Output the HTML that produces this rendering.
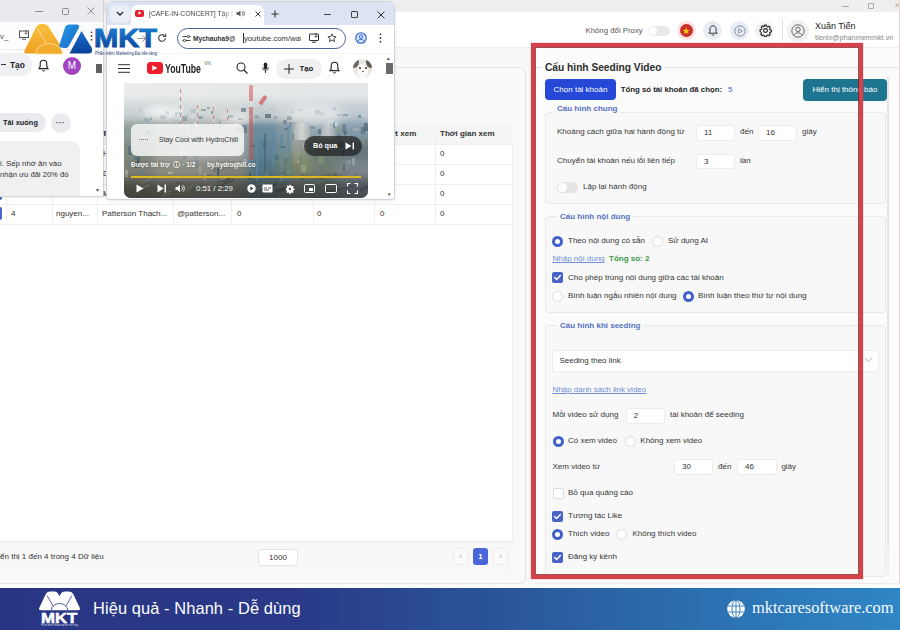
<!DOCTYPE html>
<html><head><meta charset="utf-8">
<style>
*{box-sizing:border-box;margin:0;padding:0}
html,body{width:900px;height:630px;overflow:hidden;background:#f8f8f8;font-family:"Liberation Sans",sans-serif;color:#333}
.a{position:absolute}
.t{position:absolute;white-space:nowrap;line-height:12px}
.box{position:absolute;border:1px solid #e8e8e8;border-radius:4px;background:#f8f8f8}
.inp{position:absolute;background:#fff;border:1px solid #ececec;border-radius:3px;font-size:8px;line-height:14px;padding-left:7px;color:#333}
.rad{position:absolute;width:11px;height:11px;border-radius:50%;background:#fff;border:1px solid #dcdcdc}
.rad.on{background:#fff;border:3px solid #4160c9}
.chk{position:absolute;width:11px;height:11px;border-radius:2px;background:#fff;border:1px solid #dcdcdc}
.chk.on{background:#4a63c8;border:none}
.lg{position:absolute;white-space:nowrap;line-height:12px;font-size:8px;font-weight:bold;color:#5570c2;background:linear-gradient(180deg,#fbfbfb 50%,#f8f8f8 50%);padding:0 3px}
.p8{font-size:8px;color:#3a3a3a}
</style></head><body>

<!-- app title bar -->
<div class="a" style="left:0;top:0;width:900px;height:12px;background:#efefef"></div>
<div class="a" style="left:842px;top:6px;width:7px;height:1px;background:#aaa"></div>
<div class="a" style="left:868px;top:3px;width:6px;height:6px;border:1px solid #aaa;border-radius:1px"></div>
<div class="t" style="left:894px;top:0;font-size:8px;color:#d0b0b0">✕</div>
<div class="a" style="left:899px;top:0;width:1px;height:630px;background:#f3d6d6"></div>

<!-- app header -->
<div class="a" style="left:0;top:12px;width:899px;height:36px;background:#fff;border-bottom:1px solid #eee"></div>
<div class="t p8" style="left:585.5px;top:25px;font-size:7.8px;color:#555">Không đổi Proxy</div>
<div class="a" style="left:648px;top:26px;width:22px;height:10px;border-radius:5px;background:#e9e9e9"></div>
<div class="a" style="left:649px;top:27px;width:8px;height:8px;border-radius:50%;background:#fff"></div>
<div class="a" style="left:677px;top:21px;width:19px;height:19px;border-radius:50%;background:#fbe3e3"></div>
<div class="a" style="left:680px;top:24px;width:13px;height:13px;border-radius:50%;background:#c9302a"></div>
<div class="t" style="left:682px;top:24.5px;font-size:9px;color:#f5d000;line-height:12px">★</div>
<div class="a" style="left:703px;top:21px;width:19px;height:19px;border-radius:50%;background:#e8ecf3"></div>
<div class="a" style="left:730px;top:21px;width:19px;height:19px;border-radius:50%;background:#e8ecf3"></div>
<div class="a" style="left:755px;top:21px;width:19px;height:19px;border-radius:50%;background:#f2f2f2"></div>
<div class="a" style="left:782px;top:19px;width:1px;height:22px;background:#e3e3e3"></div>
<div class="a" style="left:787px;top:20px;width:22px;height:22px;border-radius:50%;background:#f1f1f1"></div>
<svg class="a" style="left:708px;top:25px" width="10" height="11" viewBox="0 0 10 11"><path d="M5 0.8c-1.8 0-3 1.3-3 3.1v2.5L0.9 8.2h8.2L8 6.4V3.9C8 2.1 6.8.8 5 .8z" fill="none" stroke="#333" stroke-width="1"/><path d="M3.8 9.5a1.3 1.3 0 0 0 2.4 0" fill="none" stroke="#333" stroke-width="0.9"/></svg>
<svg class="a" style="left:733.5px;top:24.5px" width="12" height="12" viewBox="0 0 12 12"><circle cx="6" cy="6" r="5.2" fill="none" stroke="#8a93a8" stroke-width="1"/><path d="M4.6 3.6L8.3 6 4.6 8.4z" fill="none" stroke="#8a93a8" stroke-width="0.9" stroke-linejoin="round"/></svg>
<svg class="a" style="left:758.5px;top:24px" width="13" height="13" viewBox="0 0 24 24"><path d="M12 8.5a3.5 3.5 0 1 0 0 7 3.5 3.5 0 0 0 0-7z" fill="none" stroke="#222" stroke-width="2"/><path d="M10.3 2h3.4l.6 2.6 1.8.8 2.3-1.4 2.4 2.4-1.4 2.3.8 1.8 2.6.6v3.4l-2.6.6-.8 1.8 1.4 2.3-2.4 2.4-2.3-1.4-1.8.8-.6 2.6h-3.4l-.6-2.6-1.8-.8-2.3 1.4-2.4-2.4 1.4-2.3-.8-1.8L2 13.7v-3.4l2.6-.6.8-1.8L4 5.6 6.4 3.2l2.3 1.4 1.8-.8z" fill="none" stroke="#222" stroke-width="2" stroke-linejoin="round"/></svg>
<svg class="a" style="left:791px;top:24px" width="14" height="14" viewBox="0 0 14 14"><circle cx="7" cy="7" r="6.2" fill="none" stroke="#666" stroke-width="1"/><circle cx="7" cy="5.4" r="2.2" fill="none" stroke="#666" stroke-width="1"/><path d="M3 11.2c.9-1.6 2.3-2.4 4-2.4s3.1.8 4 2.4" fill="none" stroke="#666" stroke-width="1"/></svg>
<div class="t" style="left:815px;top:19.5px;font-size:9px;color:#222">Xuân Tiến</div>
<div class="t" style="left:815px;top:32px;font-size:7.3px;color:#888">tienlx@phanmemmkt.vn</div>

<!-- left panel -->
<div class="a" style="left:-10px;top:67px;width:536px;height:517px;border:1px solid #e6e6e6;border-radius:6px;background:#f9f9f9"></div>
<div id="table" class="a" style="left:-10px;top:124px;width:523px;height:449px;background:#fff;border:1px solid #eee;border-radius:4px"></div>
<div class="a" style="left:-10px;top:124px;width:523px;height:20px;background:#f5f5f5"></div>

<div class="a" style="left:6px;top:124px;width:1px;height:100px;background:#efefef"></div>
<div class="a" style="left:52px;top:124px;width:1px;height:100px;background:#efefef"></div>
<div class="a" style="left:97px;top:124px;width:1px;height:100px;background:#efefef"></div>
<div class="a" style="left:173px;top:124px;width:1px;height:100px;background:#efefef"></div>
<div class="a" style="left:231px;top:124px;width:1px;height:100px;background:#efefef"></div>
<div class="a" style="left:313px;top:124px;width:1px;height:100px;background:#efefef"></div>
<div class="a" style="left:374px;top:124px;width:1px;height:100px;background:#efefef"></div>
<div class="a" style="left:435px;top:124px;width:1px;height:100px;background:#efefef"></div>
<div class="a" style="left:-10px;top:144px;width:523px;height:1px;background:#efefef"></div>
<div class="a" style="left:-10px;top:164px;width:523px;height:1px;background:#efefef"></div>
<div class="a" style="left:-10px;top:184px;width:523px;height:1px;background:#efefef"></div>
<div class="a" style="left:-10px;top:204px;width:523px;height:1px;background:#efefef"></div>
<div class="a" style="left:-10px;top:224px;width:523px;height:1px;background:#efefef"></div>
<div class="t" style="left:102px;top:128px;font-size:8px;font-weight:bold;color:#333">Tên</div>
<div class="t" style="left:178px;top:128px;font-size:8px;font-weight:bold;color:#333">Handle</div>
<div class="t" style="left:236px;top:128px;font-size:8px;font-weight:bold;color:#333">Lượt thích</div>
<div class="t" style="left:318px;top:128px;font-size:8px;font-weight:bold;color:#333">Bình luận</div>
<div class="t" style="left:379px;top:128px;font-size:8px;font-weight:bold;color:#333">Lượt xem</div>
<div class="t" style="left:440px;top:128px;font-size:8px;font-weight:bold;color:#333">Thời gian xem</div>
<div class="a" style="left:-4px;top:147px;width:6px;height:13px;border-radius:2px;background:#4a63c8"></div>
<div class="t" style="left:11px;top:148px;font-size:8px;color:#333">1</div>
<div class="t" style="left:56px;top:148px;font-size:8px;color:#333">nguyen...</div>
<div class="t" style="left:102px;top:148px;font-size:8px;color:#333">Handle H...</div>
<div class="t" style="left:177px;top:148px;font-size:8px;color:#333">@handle...</div>
<div class="t" style="left:237px;top:148px;font-size:8px;color:#333">0</div>
<div class="t" style="left:317px;top:148px;font-size:8px;color:#333">0</div>
<div class="t" style="left:380px;top:148px;font-size:8px;color:#333">0</div>
<div class="t" style="left:440px;top:148px;font-size:8px;color:#333">0</div>
<div class="a" style="left:-4px;top:167px;width:6px;height:13px;border-radius:2px;background:#4a63c8"></div>
<div class="t" style="left:11px;top:168px;font-size:8px;color:#333">2</div>
<div class="t" style="left:56px;top:168px;font-size:8px;color:#333">dinh...</div>
<div class="t" style="left:102px;top:168px;font-size:8px;color:#333">Dương M...</div>
<div class="t" style="left:177px;top:168px;font-size:8px;color:#333">@duong...</div>
<div class="t" style="left:237px;top:168px;font-size:8px;color:#333">0</div>
<div class="t" style="left:317px;top:168px;font-size:8px;color:#333">0</div>
<div class="t" style="left:380px;top:168px;font-size:8px;color:#333">0</div>
<div class="t" style="left:440px;top:168px;font-size:8px;color:#333">0</div>
<div class="a" style="left:-4px;top:187px;width:6px;height:13px;border-radius:2px;background:#4a63c8"></div>
<div class="t" style="left:11px;top:188px;font-size:8px;color:#333">3</div>
<div class="t" style="left:56px;top:188px;font-size:8px;color:#333">tran...</div>
<div class="t" style="left:102px;top:188px;font-size:8px;color:#333">Mai Anh...</div>
<div class="t" style="left:177px;top:188px;font-size:8px;color:#333">@maianh...</div>
<div class="t" style="left:237px;top:188px;font-size:8px;color:#333">0</div>
<div class="t" style="left:317px;top:188px;font-size:8px;color:#333">0</div>
<div class="t" style="left:380px;top:188px;font-size:8px;color:#333">0</div>
<div class="t" style="left:440px;top:188px;font-size:8px;color:#333">0</div>
<div class="a" style="left:-4px;top:207px;width:6px;height:13px;border-radius:2px;background:#4a63c8"></div>
<div class="t" style="left:11px;top:208px;font-size:8px;color:#333">4</div>
<div class="t" style="left:56px;top:208px;font-size:8px;color:#333">nguyen...</div>
<div class="t" style="left:102px;top:208px;font-size:8px;color:#333">Patterson Thạch...</div>
<div class="t" style="left:177px;top:208px;font-size:8px;color:#333">@patterson...</div>
<div class="t" style="left:237px;top:208px;font-size:8px;color:#333">0</div>
<div class="t" style="left:317px;top:208px;font-size:8px;color:#333">0</div>
<div class="t" style="left:380px;top:208px;font-size:8px;color:#333">0</div>
<div class="t" style="left:440px;top:208px;font-size:8px;color:#333">0</div>
<div class="a" style="left:-10px;top:541px;width:523px;height:32px;background:#f8f8f8;border-top:1px solid #ececec;border-radius:0 0 4px 4px"></div>
<div class="t" style="left:-7.5px;top:551px;font-size:8px;color:#333">Hiển thị 1 đến 4 trong 4 Dữ liệu</div>
<div class="a" style="left:258px;top:548.5px;width:40px;height:17px;background:#fff;border:1px solid #e2e2e2;border-radius:3px;font-size:8px;line-height:15px;text-align:center;color:#333">1000</div>
<div class="a" style="left:453px;top:548px;width:15px;height:17px;background:#fafafa;border:1px solid #ececec;border-radius:3px;font-size:8px;line-height:15px;text-align:center;color:#aaa">‹</div>
<div class="a" style="left:473px;top:548px;width:15px;height:17px;background:#4866d8;border-radius:3px;font-size:8px;font-weight:bold;line-height:17px;text-align:center;color:#fff">1</div>
<div class="a" style="left:493px;top:548px;width:15px;height:17px;background:#fafafa;border:1px solid #ececec;border-radius:3px;font-size:8px;line-height:15px;text-align:center;color:#aaa">›</div>

<!-- right panel -->
<div class="a" style="left:535px;top:48px;width:364px;height:536px;background:#fbfbfb;border-bottom:1px solid #ececec"></div>

<!-- rp content -->
<div class="a" style="left:535px;top:66.5px;width:364px;height:1px;background:#e2e2e2"></div>
<div class="t" style="left:542px;top:60.5px;font-size:10.2px;font-weight:bold;color:#2d2d2d;background:#fbfbfb;padding:0 3px;line-height:13px">Cấu hình Seeding Video</div>
<div class="a" style="left:886.5px;top:77px;width:2.5px;height:470px;background:#e6e6e6"></div><div class="a" style="left:886.5px;top:547px;width:2px;height:28px;background:#f0f0f0"></div>
<div class="a" style="left:545px;top:79px;width:71px;height:21px;background:#2549d6;border-radius:4px;color:#fff;font-size:8px;line-height:22px;text-align:center">Chọn tài khoản</div>
<div class="t" style="left:620.7px;top:84.0px;font-size:7.8px;color:#222;font-weight:bold;">Tổng số tài khoản đã chọn:</div>
<div class="t" style="left:728px;top:84.0px;font-size:8px;color:#3a5fd0;">5</div>
<div class="a" style="left:803px;top:79px;width:84px;height:22px;background:#1e7590;border-radius:4px;color:#fff;font-size:8px;line-height:22px;text-align:center">Hiển thị thông báo</div>
<div class="box" style="left:545px;top:112px;width:341px;height:92px"></div>
<div class="lg" style="left:554px;top:103.0px">Cấu hình chung</div>
<div class="t" style="left:557px;top:126.0px;font-size:8px;color:#363636;">Khoảng cách giữa hai hành động từ</div>
<div class="inp" style="left:696px;top:124.5px;width:39px;height:16.0px;line-height:14.0px">11</div>
<div class="t" style="left:740px;top:126.0px;font-size:8px;color:#363636;">đến</div>
<div class="inp" style="left:758px;top:124.5px;width:39px;height:16.0px;line-height:14.0px">16</div>
<div class="t" style="left:802px;top:126.0px;font-size:8px;color:#363636;">giây</div>
<div class="t" style="left:557px;top:155.0px;font-size:8px;color:#363636;">Chuyển tài khoản nếu lỗi liên tiếp</div>
<div class="inp" style="left:696px;top:153.5px;width:39px;height:15.5px;line-height:13.5px">3</div>
<div class="t" style="left:740px;top:155.0px;font-size:8px;color:#363636;">lần</div>
<div class="a" style="left:557px;top:182px;width:21px;height:11px;border-radius:6px;background:#e4e4e4"></div>
<div class="a" style="left:558px;top:183px;width:9px;height:9px;border-radius:50%;background:#fff"></div>
<div class="t" style="left:583px;top:181.0px;font-size:8px;color:#363636;">Lặp lại hành động</div>
<div class="box" style="left:545px;top:216px;width:341px;height:97px"></div>
<div class="lg" style="left:557px;top:211.0px">Cấu hình nội dung</div>
<div class="rad on" style="left:552.1px;top:235.5px"></div>
<div class="t" style="left:568px;top:235.0px;font-size:8px;color:#363636;">Theo nội dung có sẵn</div>
<div class="rad" style="left:652.1px;top:235.5px"></div>
<div class="t" style="left:668px;top:235.0px;font-size:8px;color:#363636;">Sử dụng AI</div>
<div class="t" style="left:552.5px;top:253.4px;font-size:8px;color:#6e8fd8;text-decoration:underline">Nhập nội dung</div>
<div class="t" style="left:609px;top:253.4px;font-size:8px;color:#3c9a4c;font-weight:bold;">Tổng số: 2</div>
<div class="chk on" style="left:552.4px;top:272.2px"></div><svg class="a" style="left:552.4px;top:272.2px" width="11" height="11" viewBox="0 0 11 11"><path d="M2.6 5.6 L4.6 7.5 L8.4 3.4" stroke="#fff" stroke-width="1.4" fill="none" stroke-linecap="round" stroke-linejoin="round"/></svg>
<div class="t" style="left:568px;top:271.5px;font-size:8px;color:#363636;">Cho phép trùng nội dung giữa các tài khoản</div>
<div class="rad" style="left:552.1px;top:290.5px"></div>
<div class="t" style="left:568px;top:290.0px;font-size:8px;color:#363636;">Bình luận ngẫu nhiên nội dung</div>
<div class="rad on" style="left:682.5px;top:290.5px"></div>
<div class="t" style="left:698px;top:290.0px;font-size:8px;color:#363636;">Bình luận theo thứ tự nội dung</div>
<div class="box" style="left:545px;top:325px;width:341px;height:252px"></div>
<div class="lg" style="left:557px;top:319.6px">Cấu hình khi seeding</div>
<div class="inp" style="left:552.4px;top:350px;width:327px;height:22px;line-height:20px;padding-left:6px">Seeding theo link</div>
<svg class="a" style="left:864px;top:357px" width="9" height="6" viewBox="0 0 9 6"><path d="M1 1 L4.5 4.5 L8 1" stroke="#bbb" stroke-width="1" fill="none"/></svg>
<div class="t" style="left:552.4px;top:384.0px;font-size:8px;color:#6e8fd8;text-decoration:underline">Nhập danh sách link video</div>
<div class="t" style="left:552.5px;top:409.0px;font-size:8px;color:#363636;">Mỗi video sử dụng</div>
<div class="inp" style="left:625.7px;top:407.8px;width:38.89999999999998px;height:16.5px;line-height:14.5px">2</div>
<div class="t" style="left:670px;top:409.0px;font-size:8px;color:#363636;">tài khoản để seeding</div>
<div class="rad on" style="left:552.5px;top:435.9px"></div>
<div class="t" style="left:568px;top:435.4px;font-size:8px;color:#363636;">Có xem video</div>
<div class="rad" style="left:624.8px;top:435.9px"></div>
<div class="t" style="left:640.3px;top:435.4px;font-size:8px;color:#363636;">Không xem video</div>
<div class="t" style="left:552.5px;top:461.0px;font-size:8px;color:#363636;">Xem video từ</div>
<div class="inp" style="left:674px;top:459px;width:39px;height:16.399999999999977px;line-height:14.399999999999977px">30</div>
<div class="t" style="left:718px;top:461.0px;font-size:8px;color:#363636;">đến</div>
<div class="inp" style="left:737px;top:459px;width:40px;height:16.399999999999977px;line-height:14.399999999999977px">46</div>
<div class="t" style="left:781.4px;top:461.0px;font-size:8px;color:#363636;">giây</div>
<div class="chk" style="left:552.5px;top:487.5px"></div>
<div class="t" style="left:568px;top:487.0px;font-size:8px;color:#363636;">Bỏ qua quảng cáo</div>
<div class="chk on" style="left:552.4px;top:511px"></div><svg class="a" style="left:552.4px;top:511px" width="11" height="11" viewBox="0 0 11 11"><path d="M2.6 5.6 L4.6 7.5 L8.4 3.4" stroke="#fff" stroke-width="1.4" fill="none" stroke-linecap="round" stroke-linejoin="round"/></svg>
<div class="t" style="left:568px;top:510.0px;font-size:8px;color:#363636;">Tương tác Like</div>
<div class="rad on" style="left:552.1px;top:528.5px"></div>
<div class="t" style="left:568px;top:528.0px;font-size:8px;color:#363636;">Thích video</div>
<div class="rad" style="left:616.1px;top:528.5px"></div>
<div class="t" style="left:632.4px;top:528.0px;font-size:8px;color:#363636;">Không thích video</div>
<div class="chk on" style="left:552.4px;top:552px"></div><svg class="a" style="left:552.4px;top:552px" width="11" height="11" viewBox="0 0 11 11"><path d="M2.6 5.6 L4.6 7.5 L8.4 3.4" stroke="#fff" stroke-width="1.4" fill="none" stroke-linecap="round" stroke-linejoin="round"/></svg>
<div class="t" style="left:568px;top:551.0px;font-size:8px;color:#363636;">Đăng ký kênh</div>
<!-- /rp content -->
<div class="a" style="left:0;top:584.5px;width:900px;height:4px;background:#fdfdfd"></div>
<!-- banner -->
<div class="a" style="left:0;top:588px;width:900px;height:42px;background:linear-gradient(90deg,#283583 0%,#2a3a88 33%,#2a5598 55%,#2c70b0 78%,#2f86c6 100%)"></div>

<!-- red border -->
<div class="a" style="left:531px;top:43px;width:332px;height:536px;border:4px solid #d6424a;box-shadow:inset 0 0 0 1px rgba(120,25,30,.75),0 0 1.5px rgba(230,80,90,.5)"></div>

<!-- fb window -->
<div class="a" style="left:0;top:0;width:103px;height:196px;background:#fff;overflow:hidden;box-shadow:0 0 0 1px #d6d6d6,1px 1px 3px rgba(0,0,0,.12)">
<div class="a" style="left:0;top:0;width:105px;height:22px;background:#e9ebef"></div>
<div class="a" style="left:35px;top:11px;width:8px;height:1px;background:#888"></div>
<div class="a" style="left:61.5px;top:7.5px;width:7px;height:7px;border:1px solid #888;border-radius:1.5px"></div>
<svg class="a" style="left:87px;top:7px" width="8" height="8" viewBox="0 0 8 8"><path d="M0.5 0.5L7.5 7.5M7.5 0.5L0.5 7.5" stroke="#888" stroke-width="0.9"/></svg>
<div class="a" style="left:0;top:22px;width:105px;height:28px;background:#fdfdfd;border-bottom:1px solid #ededed"></div>
<div class="t" style="left:0;top:31px;font-size:8px;color:#555">v_</div>
<svg class="a" style="left:19px;top:30px" width="11" height="10" viewBox="0 0 11 10"><rect x="0.5" y="1" width="9" height="6.5" fill="none" stroke="#555" stroke-width="1"/><path d="M3 9.2h4" stroke="#555"/><path d="M7 0v4M5.6 2.8L7 4.3 8.4 2.8" stroke="#555" fill="none" stroke-width="0.9"/></svg>
<svg class="a" style="left:89.5px;top:31px" width="3" height="10" viewBox="0 0 3 10"><circle cx="1.5" cy="1.3" r="0.9" fill="#444"/><circle cx="1.5" cy="5" r="0.9" fill="#444"/><circle cx="1.5" cy="8.7" r="0.9" fill="#444"/></svg>
<div class="a" style="left:-6px;top:53px;width:38px;height:23px;border-radius:12px;background:#eef0f3"></div>
<div class="a" style="left:1px;top:64px;width:5px;height:1px;background:#333"></div>
<div class="t" style="left:10px;top:59px;font-size:8.4px;color:#222;font-weight:bold">Tạo</div>
<svg class="a" style="left:38px;top:59px" width="11" height="13" viewBox="0 0 11 13"><path d="M5.5 1.2c-2 0-3.3 1.5-3.3 3.5v2.8L1 9.6h9L8.8 7.5V4.7c0-2-1.3-3.5-3.3-3.5z" fill="none" stroke="#222" stroke-width="1.1"/><path d="M4.2 11.2a1.4 1.4 0 0 0 2.6 0" fill="none" stroke="#222" stroke-width="1"/></svg>
<div class="a" style="left:63px;top:57px;width:18px;height:18px;border-radius:50%;background:#a044bf;color:#fff;font-size:10px;line-height:18px;text-align:center">M</div>
<div class="a" style="left:96px;top:64px;width:6px;height:9px;background:#5f5f5f"></div>
<div class="a" style="left:-10px;top:113px;width:56px;height:19px;border-radius:10px;background:#e9ebee"></div>
<div class="t" style="left:3px;top:117px;font-size:7.4px;color:#222;font-weight:bold">Tải xuống</div>
<div class="a" style="left:51px;top:113px;width:20px;height:20px;border-radius:50%;background:#e9ebee"></div>
<div class="t" style="left:55.5px;top:117px;font-size:8px;color:#333;font-weight:bold;letter-spacing:0.5px">···</div>
<div class="a" style="left:-20px;top:141px;width:100px;height:70px;border-radius:9px;background:#f0f0f0"></div>
<div class="t" style="left:0;top:158px;font-size:7.8px;color:#333">i. Sếp nhớ ăn vào</div>
<div class="t" style="left:0;top:169px;font-size:7.6px;color:#333">nhận ưu đãi 20% đó</div>
<div class="t" style="left:96px;top:184px;font-size:6px;color:#555">▾</div>
</div>
<div class="t" style="left:103px;top:128px;font-size:8px;color:#555">T</div>
<div class="t" style="left:103px;top:148px;font-size:8px;color:#555">H</div>
<div class="t" style="left:103px;top:168px;font-size:8px;color:#555">D</div>
<div class="t" style="left:103px;top:188px;font-size:8px;color:#555">M</div>
<!-- /fb window -->
<!-- chrome -->
<div class="a" style="left:107px;top:2px;width:287px;height:197px;background:#fff;border-radius:6px 6px 2px 2px;overflow:hidden;box-shadow:0 0 0 1px #cfd4dc,0 1px 4px rgba(0,0,0,.15)">
<div class="a" style="left:0;top:0;width:288px;height:23px;background:#dce4f3"></div>
<div class="a" style="left:3px;top:3px;width:20px;height:18px;border-radius:6px;background:#eaeef7"></div>
<svg class="a" style="left:9px;top:9px" width="8" height="5" viewBox="0 0 8 5"><path d="M1 1L4 4L7 1" stroke="#222" stroke-width="1.3" fill="none"/></svg>
<div class="a" style="left:24px;top:3px;width:133px;height:21px;background:#fff;border-radius:7px 7px 0 0"></div>
<div class="a" style="left:27.5px;top:7.5px;width:9.5px;height:7px;background:#e0202a;border-radius:2px"></div>
<svg class="a" style="left:30.5px;top:9px" width="4" height="4" viewBox="0 0 4 4"><path d="M0.5 0.3L3.5 2L0.5 3.7z" fill="#fff"/></svg>
<div class="t" style="left:42px;top:5.5px;font-size:6.8px;color:#444;width:84px;overflow:hidden;-webkit-mask-image:linear-gradient(90deg,#000 86%,rgba(0,0,0,.2))">[CAFE-IN-CONCERT] Tập 5: Hà</div>
<svg class="a" style="left:129px;top:8px" width="9" height="7" viewBox="0 0 9 7"><path d="M0.5 2.3h1.8L4.5 0.5v6L2.3 4.7H0.5z" fill="#555"/><path d="M6 1.8a2.3 2.3 0 0 1 0 3.4M7.3 0.8a3.8 3.8 0 0 1 0 5.4" stroke="#555" stroke-width="0.8" fill="none"/></svg>
<svg class="a" style="left:148px;top:9px" width="6" height="6" viewBox="0 0 6 6"><path d="M0.5 0.5L5.5 5.5M5.5 0.5L0.5 5.5" stroke="#333" stroke-width="0.9"/></svg>
<svg class="a" style="left:164px;top:8px" width="8" height="8" viewBox="0 0 8 8"><path d="M4 0.5v7M0.5 4h7" stroke="#333" stroke-width="1.1"/></svg>
<div class="a" style="left:217px;top:11.5px;width:7px;height:1px;background:#444"></div>
<div class="a" style="left:244px;top:8.5px;width:7px;height:7px;border:1px solid #444;border-radius:1px"></div>
<svg class="a" style="left:270px;top:8.5px" width="8" height="8" viewBox="0 0 8 8"><path d="M0.5 0.5L7.5 7.5M7.5 0.5L0.5 7.5" stroke="#333" stroke-width="1"/></svg>
<div class="a" style="left:0;top:23px;width:288px;height:29px;background:#fff;border-bottom:1px solid #f6f6f6"></div>
<svg class="a" style="left:30px;top:32px" width="10" height="9" viewBox="0 0 10 9"><path d="M0.5 4.5h8M5.5 1.5l3 3-3 3" stroke="#999" stroke-width="1" fill="none"/></svg>
<svg class="a" style="left:50px;top:31px" width="10" height="10" viewBox="0 0 10 10"><path d="M8.3 5a3.3 3.3 0 1 1-1-2.4" stroke="#444" stroke-width="1.1" fill="none"/><path d="M8.6 0.8v2.6H6" stroke="#444" stroke-width="1.1" fill="none"/></svg>
<div class="a" style="left:70px;top:26px;width:169px;height:21px;border:1.6px solid #4d6497;border-radius:11px;background:#fff"></div>
<svg class="a" style="left:75px;top:32px" width="9" height="9" viewBox="0 0 9 9"><path d="M0.5 2.5h5M7.5 2.5h1M0.5 6.5h1M3.5 6.5h5" stroke="#444" stroke-width="1"/><circle cx="6.5" cy="2.5" r="1.2" fill="none" stroke="#444" stroke-width="0.9"/><circle cx="2.5" cy="6.5" r="1.2" fill="none" stroke="#444" stroke-width="0.9"/></svg>
<div class="t" style="left:86px;top:30.5px;font-size:6.6px;font-weight:bold;color:#333">Mychauha9@</div>
<div class="a" style="left:136px;top:31px;width:1px;height:10px;background:#333"></div>
<div class="t" style="left:137px;top:30.5px;font-size:7.7px;color:#333;width:57px;overflow:hidden">youtube.com/watch</div>
<svg class="a" style="left:202px;top:31px" width="11" height="10" viewBox="0 0 11 10"><rect x="0.5" y="1" width="9" height="6.5" rx="0.5" fill="none" stroke="#333" stroke-width="1"/><path d="M3 9.2h4" stroke="#333"/><path d="M7 0v4M5.6 2.8L7 4.3 8.4 2.8" stroke="#333" fill="none" stroke-width="0.9"/></svg>
<svg class="a" style="left:220px;top:31px" width="10" height="10" viewBox="0 0 10 10"><path d="M5 0.8l1.2 2.7 2.9.3-2.2 1.9.7 2.9L5 7.1 2.4 8.6l.7-2.9L.9 3.8l2.9-.3z" fill="none" stroke="#333" stroke-width="0.9" stroke-linejoin="round"/></svg>
<svg class="a" style="left:248px;top:30px" width="12" height="12" viewBox="0 0 12 12"><circle cx="6" cy="6" r="5.3" fill="#d3e3fd" stroke="#2f63c7" stroke-width="1.1"/><circle cx="6" cy="4.6" r="1.7" fill="none" stroke="#2f63c7" stroke-width="1"/><path d="M2.8 9.3c.8-1.4 1.9-2 3.2-2s2.4.6 3.2 2" fill="none" stroke="#2f63c7" stroke-width="1"/></svg>
<svg class="a" style="left:272px;top:31px" width="3" height="10" viewBox="0 0 3 10"><circle cx="1.5" cy="1.3" r="0.9" fill="#333"/><circle cx="1.5" cy="5" r="0.9" fill="#333"/><circle cx="1.5" cy="8.7" r="0.9" fill="#333"/></svg>
<svg class="a" style="left:11px;top:62px" width="12" height="9" viewBox="0 0 12 9"><path d="M0 0.7h12M0 4.5h12M0 8.3h12" stroke="#333" stroke-width="1"/></svg>
<div class="a" style="left:39.5px;top:60px;width:16px;height:12px;background:#ec1c2c;border-radius:3.5px"></div>
<svg class="a" style="left:45px;top:63px" width="6" height="6" viewBox="0 0 6 6"><path d="M0.3 0.2L5.5 3L0.3 5.8z" fill="#fff"/></svg>
<div class="t" style="left:57.5px;top:59px;font-size:13.5px;font-weight:bold;color:#222;letter-spacing:0;transform:scaleX(0.645);transform-origin:0 0;line-height:15px">YouTube</div>
<div class="t" style="left:97px;top:55px;font-size:5px;color:#666">VN</div>
<svg class="a" style="left:129px;top:60px" width="12" height="12" viewBox="0 0 12 12"><circle cx="5" cy="5" r="4" fill="none" stroke="#222" stroke-width="1.1"/><path d="M8 8l3.5 3.5" stroke="#222" stroke-width="1.2"/></svg>
<svg class="a" style="left:155px;top:60px" width="7" height="12" viewBox="0 0 7 12"><rect x="1.8" y="0.5" width="3.4" height="7" rx="1.7" fill="#222"/><path d="M0.6 5.5a2.9 2.9 0 0 0 5.8 0M3.5 8.6V11" stroke="#222" stroke-width="0.9" fill="none"/></svg>
<div class="a" style="left:169px;top:57px;width:46px;height:20px;border-radius:10px;background:#f0f0f0"></div>
<svg class="a" style="left:177px;top:62px" width="10" height="10" viewBox="0 0 10 10"><path d="M5 0v10M0 5h10" stroke="#222" stroke-width="1"/></svg>
<div class="t" style="left:192.5px;top:61px;font-size:7.8px;font-weight:bold;color:#222">Tạo</div>
<svg class="a" style="left:222px;top:59px" width="11" height="13" viewBox="0 0 11 13"><path d="M5.5 1.2c-2 0-3.3 1.5-3.3 3.5v2.8L1 9.6h9L8.8 7.5V4.7c0-2-1.3-3.5-3.3-3.5z" fill="none" stroke="#222" stroke-width="1.1"/><path d="M4.2 11.2a1.4 1.4 0 0 0 2.6 0" fill="none" stroke="#222" stroke-width="1"/></svg>
<div class="a" style="left:246px;top:57px;width:19px;height:19px;border-radius:50%;overflow:hidden;background:#e9e6e0">
<div class="a" style="left:-4px;top:-3px;width:10px;height:12px;border-radius:50%;background:#6d6760"></div>
<div class="a" style="left:13px;top:-3px;width:10px;height:12px;border-radius:50%;background:#5d5750"></div>
<div class="a" style="left:4px;top:5px;width:11px;height:14px;border-radius:50%;background:#faf9f6"></div>
<div class="a" style="left:5.5px;top:8px;width:2px;height:2px;border-radius:50%;background:#333"></div><div class="a" style="left:11.5px;top:8px;width:2px;height:2px;border-radius:50%;background:#333"></div><div class="a" style="left:8.5px;top:11.5px;width:2px;height:1.5px;border-radius:50%;background:#555"></div>
</div>
<div class="t" style="left:280px;top:50px;font-size:5px;color:#333">▴</div>
<div class="a" style="left:279px;top:61px;width:7px;height:11px;background:#6a6a6a"></div>
<div class="t" style="left:281px;top:186px;font-size:5px;color:#333">▾</div>
<!-- video -->
<div class="a" style="left:16.5px;top:81px;width:244.5px;height:115px;overflow:hidden;border-radius:0 0 7px 7px;background:#8a9494">
<div class="a" style="left:0;top:0;width:244.5px;height:115px;filter:blur(5px)">
<div class="a" style="left:-12.0px;top:-12.0px;width:43.2px;height:31.8px;background:#e9ebec"></div>
<div class="a" style="left:30.6px;top:-12.0px;width:31.2px;height:31.8px;background:#e8eaeb"></div>
<div class="a" style="left:61.1px;top:-12.0px;width:31.2px;height:31.8px;background:#e8eaeb"></div>
<div class="a" style="left:91.7px;top:-12.0px;width:31.2px;height:31.8px;background:#e7eaeb"></div>
<div class="a" style="left:122.2px;top:-12.0px;width:31.2px;height:31.8px;background:#e6e9ea"></div>
<div class="a" style="left:152.8px;top:-12.0px;width:31.2px;height:31.8px;background:#e5e8e9"></div>
<div class="a" style="left:183.4px;top:-12.0px;width:31.2px;height:31.8px;background:#e4e7e9"></div>
<div class="a" style="left:213.9px;top:-12.0px;width:43.2px;height:31.8px;background:#e3e7e9"></div>
<div class="a" style="left:-12.0px;top:19.2px;width:43.2px;height:19.8px;background:#ccd4d6"></div>
<div class="a" style="left:30.6px;top:19.2px;width:31.2px;height:19.8px;background:#cdd4d5"></div>
<div class="a" style="left:61.1px;top:19.2px;width:31.2px;height:19.8px;background:#d2d7d8"></div>
<div class="a" style="left:91.7px;top:19.2px;width:31.2px;height:19.8px;background:#cfd5d6"></div>
<div class="a" style="left:122.2px;top:19.2px;width:31.2px;height:19.8px;background:#c4ccd0"></div>
<div class="a" style="left:152.8px;top:19.2px;width:31.2px;height:19.8px;background:#cfd5d7"></div>
<div class="a" style="left:183.4px;top:19.2px;width:31.2px;height:19.8px;background:#c8d1d6"></div>
<div class="a" style="left:213.9px;top:19.2px;width:43.2px;height:19.8px;background:#c2ccd2"></div>
<div class="a" style="left:-12.0px;top:38.3px;width:43.2px;height:19.8px;background:#8e9e9a"></div>
<div class="a" style="left:30.6px;top:38.3px;width:31.2px;height:19.8px;background:#9ca7a5"></div>
<div class="a" style="left:61.1px;top:38.3px;width:31.2px;height:19.8px;background:#a3aaaa"></div>
<div class="a" style="left:91.7px;top:38.3px;width:31.2px;height:19.8px;background:#a6acaa"></div>
<div class="a" style="left:122.2px;top:38.3px;width:31.2px;height:19.8px;background:#8299a2"></div>
<div class="a" style="left:152.8px;top:38.3px;width:31.2px;height:19.8px;background:#a2aaaa"></div>
<div class="a" style="left:183.4px;top:38.3px;width:31.2px;height:19.8px;background:#90a4ae"></div>
<div class="a" style="left:213.9px;top:38.3px;width:43.2px;height:19.8px;background:#819aab"></div>
<div class="a" style="left:-12.0px;top:57.5px;width:43.2px;height:19.8px;background:#7f8b82"></div>
<div class="a" style="left:30.6px;top:57.5px;width:31.2px;height:19.8px;background:#a2a6a2"></div>
<div class="a" style="left:61.1px;top:57.5px;width:31.2px;height:19.8px;background:#b0b2ae"></div>
<div class="a" style="left:91.7px;top:57.5px;width:31.2px;height:19.8px;background:#a9aba9"></div>
<div class="a" style="left:122.2px;top:57.5px;width:31.2px;height:19.8px;background:#708b98"></div>
<div class="a" style="left:152.8px;top:57.5px;width:31.2px;height:19.8px;background:#949b93"></div>
<div class="a" style="left:183.4px;top:57.5px;width:31.2px;height:19.8px;background:#6e7a78"></div>
<div class="a" style="left:213.9px;top:57.5px;width:43.2px;height:19.8px;background:#66767c"></div>
<div class="a" style="left:-12.0px;top:76.7px;width:43.2px;height:19.8px;background:#7c7e74"></div>
<div class="a" style="left:30.6px;top:76.7px;width:31.2px;height:19.8px;background:#8e8e82"></div>
<div class="a" style="left:61.1px;top:76.7px;width:31.2px;height:19.8px;background:#8c8c82"></div>
<div class="a" style="left:91.7px;top:76.7px;width:31.2px;height:19.8px;background:#7e8279"></div>
<div class="a" style="left:122.2px;top:76.7px;width:31.2px;height:19.8px;background:#607a82"></div>
<div class="a" style="left:152.8px;top:76.7px;width:31.2px;height:19.8px;background:#6c7472"></div>
<div class="a" style="left:183.4px;top:76.7px;width:31.2px;height:19.8px;background:#6f7c72"></div>
<div class="a" style="left:213.9px;top:76.7px;width:43.2px;height:19.8px;background:#7c868a"></div>
<div class="a" style="left:-12.0px;top:95.8px;width:43.2px;height:31.8px;background:#56594f"></div>
<div class="a" style="left:30.6px;top:95.8px;width:31.2px;height:31.8px;background:#5b5d56"></div>
<div class="a" style="left:61.1px;top:95.8px;width:31.2px;height:31.8px;background:#5d5f59"></div>
<div class="a" style="left:91.7px;top:95.8px;width:31.2px;height:31.8px;background:#595d59"></div>
<div class="a" style="left:122.2px;top:95.8px;width:31.2px;height:31.8px;background:#4b5659"></div>
<div class="a" style="left:152.8px;top:95.8px;width:31.2px;height:31.8px;background:#565b59"></div>
<div class="a" style="left:183.4px;top:95.8px;width:31.2px;height:31.8px;background:#515959"></div>
<div class="a" style="left:213.9px;top:95.8px;width:43.2px;height:31.8px;background:#5a6269"></div>
</div>
<!-- texture --><div class="a" style="left:0;top:0;width:245px;height:115px;filter:blur(0.7px)"><div class="a" style="left:77.7px;top:26.4px;width:5.3px;height:1.8px;background:#3f5862;opacity:0.38"></div><div class="a" style="left:139.9px;top:38.6px;width:3.1px;height:1.8px;background:#b6c2c4;opacity:0.37"></div><div class="a" style="left:21.8px;top:30.8px;width:6.1px;height:1.9px;background:#d8dcdc;opacity:0.54"></div><div class="a" style="left:139.9px;top:25.0px;width:4.9px;height:1.7px;background:#d8dcdc;opacity:0.36"></div><div class="a" style="left:206.0px;top:28.6px;width:2.7px;height:1.9px;background:#a9b9c0;opacity:0.52"></div><div class="a" style="left:163.7px;top:25.6px;width:4.9px;height:2.2px;background:#c8d0d2;opacity:0.51"></div><div class="a" style="left:15.1px;top:25.0px;width:3.0px;height:3.9px;background:#b6c2c4;opacity:0.58"></div><div class="a" style="left:111.7px;top:38.8px;width:3.8px;height:2.4px;background:#d8dcdc;opacity:0.56"></div><div class="a" style="left:58.6px;top:33.2px;width:4.6px;height:4.6px;background:#5c7c8c;opacity:0.48"></div><div class="a" style="left:146.2px;top:25.2px;width:4.6px;height:2.1px;background:#a9b9c0;opacity:0.40"></div><div class="a" style="left:117.4px;top:24.6px;width:5.3px;height:4.2px;background:#3f5862;opacity:0.59"></div><div class="a" style="left:196.4px;top:29.4px;width:3.8px;height:3.2px;background:#7c9aa8;opacity:0.49"></div><div class="a" style="left:201.6px;top:39.1px;width:4.4px;height:3.8px;background:#c8d0d2;opacity:0.57"></div><div class="a" style="left:74.3px;top:33.2px;width:5.4px;height:3.1px;background:#5c7c8c;opacity:0.47"></div><div class="a" style="left:160.5px;top:24.4px;width:4.3px;height:2.1px;background:#c8d0d2;opacity:0.50"></div><div class="a" style="left:52.4px;top:28.6px;width:5.7px;height:2.9px;background:#7c9aa8;opacity:0.50"></div><div class="a" style="left:39.9px;top:30.4px;width:3.4px;height:2.0px;background:#b6c2c4;opacity:0.61"></div><div class="a" style="left:66.8px;top:30.6px;width:3.8px;height:4.6px;background:#d8dcdc;opacity:0.40"></div><div class="a" style="left:42.3px;top:27.7px;width:3.2px;height:3.2px;background:#3f5862;opacity:0.40"></div><div class="a" style="left:67.7px;top:26.3px;width:4.7px;height:3.6px;background:#a9b9c0;opacity:0.64"></div><div class="a" style="left:165.7px;top:32.2px;width:5.1px;height:3.9px;background:#c8d0d2;opacity:0.49"></div><div class="a" style="left:209.0px;top:39.2px;width:5.4px;height:3.5px;background:#b6c2c4;opacity:0.47"></div><div class="a" style="left:24.8px;top:34.1px;width:2.3px;height:1.7px;background:#d8dcdc;opacity:0.48"></div><div class="a" style="left:26.4px;top:33.6px;width:2.5px;height:3.5px;background:#3f5862;opacity:0.38"></div><div class="a" style="left:87.3px;top:24.4px;width:6.4px;height:3.6px;background:#d8dcdc;opacity:0.54"></div><div class="a" style="left:229.3px;top:33.6px;width:4.4px;height:1.9px;background:#b6c2c4;opacity:0.65"></div><div class="a" style="left:111.8px;top:31.7px;width:2.4px;height:1.9px;background:#a9b9c0;opacity:0.57"></div><div class="a" style="left:114.9px;top:35.1px;width:4.6px;height:2.2px;background:#3f5862;opacity:0.46"></div><div class="a" style="left:165.6px;top:38.6px;width:5.8px;height:2.5px;background:#5c7c8c;opacity:0.61"></div><div class="a" style="left:167.1px;top:28.2px;width:3.8px;height:2.1px;background:#7c9aa8;opacity:0.42"></div><div class="a" style="left:130.0px;top:32.0px;width:5.2px;height:3.6px;background:#7c9aa8;opacity:0.65"></div><div class="a" style="left:204.6px;top:36.9px;width:6.1px;height:4.1px;background:#d8dcdc;opacity:0.41"></div><div class="a" style="left:118.3px;top:35.7px;width:6.9px;height:4.3px;background:#b6c2c4;opacity:0.43"></div><div class="a" style="left:166.2px;top:39.3px;width:4.2px;height:4.8px;background:#a9b9c0;opacity:0.64"></div><div class="a" style="left:87.5px;top:27.5px;width:3.1px;height:2.2px;background:#d8dcdc;opacity:0.49"></div><div class="a" style="left:236.5px;top:33.8px;width:2.0px;height:4.7px;background:#a9b9c0;opacity:0.59"></div><div class="a" style="left:20.3px;top:34.6px;width:6.5px;height:4.2px;background:#7c9aa8;opacity:0.41"></div><div class="a" style="left:213.4px;top:30.9px;width:5.2px;height:1.8px;background:#5c7c8c;opacity:0.47"></div><div class="a" style="left:96.3px;top:39.1px;width:5.6px;height:2.1px;background:#d8dcdc;opacity:0.36"></div><div class="a" style="left:141.8px;top:31.4px;width:5.3px;height:3.6px;background:#3f5862;opacity:0.64"></div><div class="a" style="left:157.7px;top:29.6px;width:4.7px;height:2.0px;background:#c8d0d2;opacity:0.59"></div><div class="a" style="left:174.3px;top:25.6px;width:5.7px;height:2.0px;background:#7c9aa8;opacity:0.41"></div><div class="a" style="left:209.7px;top:24.4px;width:3.1px;height:3.3px;background:#7c9aa8;opacity:0.53"></div><div class="a" style="left:62.2px;top:30.7px;width:2.7px;height:4.7px;background:#a9b9c0;opacity:0.62"></div><div class="a" style="left:159.0px;top:37.0px;width:4.6px;height:4.4px;background:#3f5862;opacity:0.39"></div><div class="a" style="left:36.4px;top:32.2px;width:6.4px;height:4.2px;background:#3f5862;opacity:0.35"></div><div class="a" style="left:191.8px;top:26.8px;width:4.4px;height:4.0px;background:#3f5862;opacity:0.37"></div><div class="a" style="left:163.8px;top:32.5px;width:4.4px;height:4.2px;background:#3f5862;opacity:0.37"></div><div class="a" style="left:45.9px;top:24.7px;width:2.5px;height:3.1px;background:#c8d0d2;opacity:0.58"></div><div class="a" style="left:219.0px;top:31.1px;width:5.1px;height:3.3px;background:#3f5862;opacity:0.41"></div><div class="a" style="left:66.5px;top:32.1px;width:6.0px;height:3.3px;background:#d8dcdc;opacity:0.56"></div><div class="a" style="left:210.4px;top:39.1px;width:3.3px;height:3.5px;background:#d8dcdc;opacity:0.60"></div><div class="a" style="left:32.9px;top:25.9px;width:4.2px;height:1.8px;background:#d8dcdc;opacity:0.48"></div><div class="a" style="left:51.0px;top:28.8px;width:2.6px;height:4.2px;background:#5c7c8c;opacity:0.54"></div><div class="a" style="left:87.9px;top:28.0px;width:2.7px;height:3.1px;background:#5c7c8c;opacity:0.64"></div><div class="a" style="left:95.6px;top:31.8px;width:6.9px;height:4.4px;background:#d8dcdc;opacity:0.56"></div><div class="a" style="left:238.6px;top:30.5px;width:4.1px;height:2.7px;background:#c8d0d2;opacity:0.57"></div><div class="a" style="left:4.7px;top:32.9px;width:4.2px;height:1.6px;background:#a9b9c0;opacity:0.51"></div><div class="a" style="left:70.9px;top:39.4px;width:2.6px;height:4.7px;background:#d8dcdc;opacity:0.64"></div><div class="a" style="left:25.1px;top:28.2px;width:2.2px;height:4.2px;background:#a9b9c0;opacity:0.58"></div><div class="a" style="left:196.7px;top:37.6px;width:5.4px;height:4.8px;background:#b6c2c4;opacity:0.39"></div><div class="a" style="left:220.6px;top:33.1px;width:5.5px;height:1.8px;background:#c8d0d2;opacity:0.59"></div><div class="a" style="left:44.0px;top:38.3px;width:3.3px;height:1.6px;background:#c8d0d2;opacity:0.59"></div><div class="a" style="left:20.1px;top:37.7px;width:2.3px;height:4.5px;background:#b6c2c4;opacity:0.35"></div><div class="a" style="left:238.6px;top:30.7px;width:6.6px;height:3.7px;background:#c8d0d2;opacity:0.51"></div><div class="a" style="left:57.2px;top:25.8px;width:2.8px;height:1.7px;background:#d8dcdc;opacity:0.63"></div><div class="a" style="left:150.9px;top:32.5px;width:3.0px;height:3.1px;background:#5c7c8c;opacity:0.40"></div><div class="a" style="left:83.3px;top:24.3px;width:3.3px;height:1.6px;background:#5c7c8c;opacity:0.50"></div><div class="a" style="left:234.7px;top:32.2px;width:3.2px;height:3.1px;background:#5c7c8c;opacity:0.60"></div><div class="a" style="left:103.7px;top:31.9px;width:6.2px;height:2.9px;background:#3f5862;opacity:0.44"></div><div class="a" style="left:51.6px;top:50.4px;width:2.4px;height:8.2px;background:#7c9aa8;opacity:0.42"></div><div class="a" style="left:83.4px;top:40.9px;width:2.1px;height:2.5px;background:#2f4450;opacity:0.43"></div><div class="a" style="left:13.3px;top:73.9px;width:3.2px;height:5.5px;background:#2f4450;opacity:0.48"></div><div class="a" style="left:166.2px;top:40.4px;width:2.3px;height:3.9px;background:#3f5862;opacity:0.38"></div><div class="a" style="left:230.8px;top:90.5px;width:4.0px;height:3.7px;background:#2f4450;opacity:0.37"></div><div class="a" style="left:43.9px;top:56.1px;width:1.9px;height:4.0px;background:#8a9870;opacity:0.37"></div><div class="a" style="left:186.3px;top:42.9px;width:5.2px;height:3.0px;background:#3f5862;opacity:0.42"></div><div class="a" style="left:71.9px;top:72.0px;width:1.9px;height:8.7px;background:#7c9aa8;opacity:0.50"></div><div class="a" style="left:171.8px;top:85.5px;width:3.3px;height:4.3px;background:#4a6a7a;opacity:0.34"></div><div class="a" style="left:173.8px;top:72.7px;width:1.7px;height:7.8px;background:#c5cccc;opacity:0.52"></div><div class="a" style="left:194.9px;top:45.5px;width:3.9px;height:5.5px;background:#3f5862;opacity:0.55"></div><div class="a" style="left:140.2px;top:86.2px;width:4.6px;height:6.9px;background:#8a9870;opacity:0.33"></div><div class="a" style="left:10.0px;top:72.4px;width:5.8px;height:4.6px;background:#4a6a7a;opacity:0.47"></div><div class="a" style="left:150.7px;top:71.8px;width:4.6px;height:5.4px;background:#3f5862;opacity:0.44"></div><div class="a" style="left:16.8px;top:88.4px;width:5.5px;height:2.6px;background:#5c7c8c;opacity:0.52"></div><div class="a" style="left:113.7px;top:81.7px;width:5.3px;height:3.6px;background:#8a9870;opacity:0.37"></div><div class="a" style="left:156.0px;top:62.9px;width:5.3px;height:2.5px;background:#2f4450;opacity:0.53"></div><div class="a" style="left:148.1px;top:72.7px;width:1.8px;height:3.0px;background:#2f4450;opacity:0.50"></div><div class="a" style="left:166.3px;top:71.5px;width:2.1px;height:5.4px;background:#4a6a7a;opacity:0.38"></div><div class="a" style="left:161.3px;top:75.4px;width:4.5px;height:4.0px;background:#2f4450;opacity:0.44"></div><div class="a" style="left:111.9px;top:44.4px;width:5.5px;height:3.4px;background:#5c7c8c;opacity:0.58"></div><div class="a" style="left:4.2px;top:62.8px;width:5.2px;height:8.8px;background:#4a6a7a;opacity:0.60"></div><div class="a" style="left:92.8px;top:87.5px;width:5.7px;height:2.5px;background:#5c7c8c;opacity:0.34"></div><div class="a" style="left:125.8px;top:89.4px;width:2.1px;height:7.7px;background:#2f4450;opacity:0.57"></div><div class="a" style="left:168.8px;top:50.5px;width:5.5px;height:5.4px;background:#3f5862;opacity:0.35"></div><div class="a" style="left:228.0px;top:74.8px;width:3.3px;height:7.1px;background:#c5cccc;opacity:0.40"></div><div class="a" style="left:75.9px;top:83.4px;width:1.5px;height:7.3px;background:#c5cccc;opacity:0.34"></div><div class="a" style="left:222.3px;top:76.5px;width:5.6px;height:4.0px;background:#aab4a8;opacity:0.32"></div><div class="a" style="left:93.6px;top:85.0px;width:1.8px;height:8.5px;background:#2f4450;opacity:0.56"></div><div class="a" style="left:67.4px;top:40.8px;width:4.5px;height:6.4px;background:#7c9aa8;opacity:0.37"></div><div class="a" style="left:63.8px;top:65.6px;width:2.4px;height:4.6px;background:#c5cccc;opacity:0.57"></div><div class="a" style="left:194.9px;top:72.1px;width:5.6px;height:8.6px;background:#8a9870;opacity:0.52"></div><div class="a" style="left:11.9px;top:77.5px;width:3.5px;height:7.3px;background:#2f4450;opacity:0.45"></div><div class="a" style="left:218.9px;top:67.7px;width:2.3px;height:4.9px;background:#2f4450;opacity:0.39"></div><div class="a" style="left:177.4px;top:90.7px;width:2.7px;height:6.6px;background:#2f4450;opacity:0.44"></div><div class="a" style="left:160.5px;top:44.5px;width:4.4px;height:2.5px;background:#4a6a7a;opacity:0.47"></div><div class="a" style="left:108.7px;top:56.0px;width:4.9px;height:5.0px;background:#8a9870;opacity:0.37"></div><div class="a" style="left:41.9px;top:68.0px;width:2.9px;height:4.6px;background:#8a9870;opacity:0.57"></div><div class="a" style="left:179.9px;top:60.3px;width:3.4px;height:5.7px;background:#c5cccc;opacity:0.38"></div><div class="a" style="left:180.5px;top:64.9px;width:4.1px;height:4.5px;background:#8a9870;opacity:0.33"></div><div class="a" style="left:215.2px;top:58.8px;width:4.4px;height:5.0px;background:#2f4450;opacity:0.55"></div><div class="a" style="left:209.5px;top:39.2px;width:1.6px;height:7.0px;background:#4a6a7a;opacity:0.59"></div><div class="a" style="left:117.6px;top:41.9px;width:5.7px;height:8.5px;background:#4a6a7a;opacity:0.59"></div><div class="a" style="left:59.6px;top:43.9px;width:2.2px;height:5.7px;background:#5c7c8c;opacity:0.58"></div><div class="a" style="left:173.2px;top:73.0px;width:4.9px;height:5.2px;background:#3f5862;opacity:0.30"></div><div class="a" style="left:30.2px;top:68.7px;width:1.7px;height:7.0px;background:#7c9aa8;opacity:0.49"></div><div class="a" style="left:126.8px;top:61.6px;width:4.9px;height:2.7px;background:#2f4450;opacity:0.46"></div><div class="a" style="left:139.9px;top:59.0px;width:2.5px;height:6.2px;background:#3f5862;opacity:0.46"></div><div class="a" style="left:239.1px;top:53.0px;width:2.9px;height:7.9px;background:#8a9870;opacity:0.44"></div><div class="a" style="left:56.3px;top:51.3px;width:5.8px;height:6.9px;background:#2f4450;opacity:0.32"></div><div class="a" style="left:46.6px;top:85.8px;width:4.4px;height:2.6px;background:#8a9870;opacity:0.50"></div><div class="a" style="left:222.0px;top:50.2px;width:1.7px;height:4.4px;background:#c5cccc;opacity:0.41"></div><div class="a" style="left:95.1px;top:38.4px;width:2.8px;height:7.9px;background:#5c7c8c;opacity:0.36"></div><div class="a" style="left:232.8px;top:54.8px;width:5.2px;height:3.6px;background:#8a9870;opacity:0.38"></div><div class="a" style="left:213.4px;top:43.9px;width:4.3px;height:6.3px;background:#8a9870;opacity:0.45"></div><div class="a" style="left:218.5px;top:41.0px;width:4.2px;height:8.5px;background:#3f5862;opacity:0.36"></div><div class="a" style="left:233.8px;top:45.7px;width:1.7px;height:2.4px;background:#c5cccc;opacity:0.43"></div><div class="a" style="left:170.9px;top:55.0px;width:2.0px;height:2.6px;background:#7c9aa8;opacity:0.40"></div><div class="a" style="left:44.5px;top:88.5px;width:4.9px;height:2.2px;background:#c5cccc;opacity:0.55"></div><div class="a" style="left:236.4px;top:61.9px;width:2.0px;height:2.5px;background:#5c7c8c;opacity:0.41"></div><div class="a" style="left:229.3px;top:44.7px;width:5.8px;height:3.5px;background:#aab4a8;opacity:0.53"></div><div class="a" style="left:74.1px;top:81.4px;width:1.9px;height:6.9px;background:#8a9870;opacity:0.41"></div><div class="a" style="left:220.7px;top:48.4px;width:3.1px;height:8.3px;background:#3f5862;opacity:0.49"></div><div class="a" style="left:59.5px;top:71.8px;width:3.3px;height:4.6px;background:#4a6a7a;opacity:0.32"></div><div class="a" style="left:220.8px;top:51.9px;width:4.9px;height:8.3px;background:#aab4a8;opacity:0.41"></div><div class="a" style="left:80.4px;top:89.5px;width:1.7px;height:7.2px;background:#aab4a8;opacity:0.58"></div><div class="a" style="left:71.4px;top:77.0px;width:4.2px;height:7.6px;background:#5c7c8c;opacity:0.31"></div><div class="a" style="left:56.1px;top:63.7px;width:5.8px;height:8.7px;background:#c5cccc;opacity:0.54"></div><div class="a" style="left:219.3px;top:82.0px;width:2.1px;height:5.5px;background:#3f5862;opacity:0.54"></div><div class="a" style="left:177.2px;top:82.4px;width:5.0px;height:6.3px;background:#aab4a8;opacity:0.56"></div><div class="a" style="left:110.6px;top:80.3px;width:4.2px;height:5.6px;background:#c5cccc;opacity:0.53"></div><div class="a" style="left:59.4px;top:41.5px;width:1.7px;height:5.9px;background:#aab4a8;opacity:0.35"></div><div class="a" style="left:102.4px;top:43.7px;width:1.8px;height:6.4px;background:#8a9870;opacity:0.33"></div><div class="a" style="left:119.6px;top:76.3px;width:3.5px;height:3.6px;background:#c5cccc;opacity:0.44"></div><div class="a" style="left:213.9px;top:50.7px;width:3.9px;height:7.4px;background:#5c7c8c;opacity:0.53"></div><div class="a" style="left:70.5px;top:53.1px;width:2.7px;height:3.8px;background:#2f4450;opacity:0.36"></div><div class="a" style="left:59.4px;top:51.2px;width:2.2px;height:8.2px;background:#8a9870;opacity:0.40"></div><div class="a" style="left:95.1px;top:91.6px;width:3.8px;height:3.6px;background:#5c7c8c;opacity:0.50"></div><div class="a" style="left:237.8px;top:43.5px;width:3.6px;height:7.7px;background:#4a6a7a;opacity:0.57"></div><div class="a" style="left:9.7px;top:53.9px;width:2.0px;height:3.3px;background:#8a9870;opacity:0.58"></div><div class="a" style="left:89.3px;top:84.8px;width:3.5px;height:3.8px;background:#3f5862;opacity:0.33"></div><div class="a" style="left:143.1px;top:71.5px;width:2.5px;height:4.6px;background:#7c9aa8;opacity:0.31"></div><div class="a" style="left:240.0px;top:40.1px;width:4.8px;height:8.4px;background:#3f5862;opacity:0.55"></div><div class="a" style="left:98.2px;top:58.1px;width:4.3px;height:2.5px;background:#3f5862;opacity:0.54"></div><div class="a" style="left:131.5px;top:41.4px;width:2.0px;height:4.8px;background:#7c9aa8;opacity:0.49"></div><div class="a" style="left:21.9px;top:46.8px;width:4.6px;height:4.9px;background:#2f4450;opacity:0.50"></div><div class="a" style="left:100.3px;top:40.8px;width:4.9px;height:8.2px;background:#c5cccc;opacity:0.42"></div><div class="a" style="left:207.4px;top:91.8px;width:3.1px;height:3.4px;background:#c5cccc;opacity:0.36"></div><div class="a" style="left:1.4px;top:86.7px;width:3.4px;height:7.7px;background:#c5cccc;opacity:0.47"></div><div class="a" style="left:87.5px;top:79.7px;width:2.1px;height:2.4px;background:#7c9aa8;opacity:0.49"></div><div class="a" style="left:132px;top:53.6px;width:2.2px;height:44.3px;background:#6f98ae;opacity:.55"></div><div class="a" style="left:140px;top:51.1px;width:2.3px;height:40.2px;background:#3f5d70;opacity:.55"></div><div class="a" style="left:148px;top:47.8px;width:3.9px;height:36.6px;background:#6f98ae;opacity:.55"></div><div class="a" style="left:156px;top:51.3px;width:3.6px;height:47.1px;background:#6f98ae;opacity:.55"></div><div class="a" style="left:163px;top:41.9px;width:3.9px;height:49.6px;background:#6f98ae;opacity:.55"></div><div class="a" style="left:75.5px;top:103.2px;width:14.9px;height:1.1px;background:#8c8c78;opacity:0.51;transform:rotate(-12deg)"></div><div class="a" style="left:153.7px;top:109.4px;width:14.7px;height:1.9px;background:#5a5e50;opacity:0.55;transform:rotate(-22deg)"></div><div class="a" style="left:52.4px;top:98.0px;width:13.3px;height:1.6px;background:#3a403c;opacity:0.34;transform:rotate(-10deg)"></div><div class="a" style="left:195.8px;top:92.8px;width:18.4px;height:2.3px;background:#3a403c;opacity:0.50;transform:rotate(-20deg)"></div><div class="a" style="left:93.6px;top:99.4px;width:17.9px;height:2.2px;background:#2e3432;opacity:0.39;transform:rotate(-21deg)"></div><div class="a" style="left:93.4px;top:97.2px;width:13.1px;height:1.3px;background:#3a403c;opacity:0.49;transform:rotate(-18deg)"></div><div class="a" style="left:56.5px;top:107.1px;width:16.9px;height:1.7px;background:#5a5e50;opacity:0.54;transform:rotate(-19deg)"></div><div class="a" style="left:16.1px;top:97.0px;width:11.1px;height:2.2px;background:#8c8c78;opacity:0.45;transform:rotate(-24deg)"></div><div class="a" style="left:152.7px;top:90.1px;width:16.3px;height:2.2px;background:#8c8c78;opacity:0.32;transform:rotate(-14deg)"></div><div class="a" style="left:214.8px;top:104.3px;width:17.0px;height:1.0px;background:#3a403c;opacity:0.60;transform:rotate(-14deg)"></div><div class="a" style="left:195.6px;top:92.8px;width:19.7px;height:1.7px;background:#5a5e50;opacity:0.51;transform:rotate(-14deg)"></div><div class="a" style="left:53.1px;top:108.8px;width:14.5px;height:1.4px;background:#7a7a68;opacity:0.57;transform:rotate(-21deg)"></div><div class="a" style="left:195.8px;top:91.6px;width:13.0px;height:2.4px;background:#5a5e50;opacity:0.48;transform:rotate(-16deg)"></div><div class="a" style="left:57.0px;top:97.3px;width:8.8px;height:1.6px;background:#7a7a68;opacity:0.50;transform:rotate(-12deg)"></div><div class="a" style="left:40.5px;top:107.6px;width:7.6px;height:1.8px;background:#7a7a68;opacity:0.59;transform:rotate(-18deg)"></div><div class="a" style="left:125.1px;top:105.2px;width:18.5px;height:1.4px;background:#8c8c78;opacity:0.49;transform:rotate(-19deg)"></div><div class="a" style="left:191.4px;top:94.6px;width:19.9px;height:1.9px;background:#7a7a68;opacity:0.40;transform:rotate(-24deg)"></div><div class="a" style="left:55.2px;top:103.4px;width:19.4px;height:1.4px;background:#8c8c78;opacity:0.38;transform:rotate(-15deg)"></div><div class="a" style="left:236.2px;top:102.6px;width:15.3px;height:1.5px;background:#3a403c;opacity:0.52;transform:rotate(-22deg)"></div><div class="a" style="left:69.8px;top:103.6px;width:11.8px;height:1.5px;background:#3a403c;opacity:0.34;transform:rotate(-22deg)"></div><div class="a" style="left:156.7px;top:88.6px;width:6.0px;height:1.5px;background:#3a403c;opacity:0.46;transform:rotate(-17deg)"></div><div class="a" style="left:99.2px;top:95.5px;width:7.9px;height:1.5px;background:#2e3432;opacity:0.35;transform:rotate(-25deg)"></div><div class="a" style="left:192.4px;top:105.7px;width:12.3px;height:1.1px;background:#5a5e50;opacity:0.56;transform:rotate(-13deg)"></div><div class="a" style="left:96.5px;top:94.6px;width:6.2px;height:2.0px;background:#8c8c78;opacity:0.57;transform:rotate(-16deg)"></div><div class="a" style="left:138.8px;top:103.0px;width:13.2px;height:1.7px;background:#5a5e50;opacity:0.57;transform:rotate(-24deg)"></div><div class="a" style="left:127.6px;top:98.1px;width:9.3px;height:1.1px;background:#3a403c;opacity:0.30;transform:rotate(-17deg)"></div><div class="a" style="left:225.8px;top:91.6px;width:8.8px;height:1.9px;background:#8c8c78;opacity:0.49;transform:rotate(-19deg)"></div><div class="a" style="left:147.2px;top:100.7px;width:6.9px;height:1.9px;background:#2e3432;opacity:0.51;transform:rotate(-25deg)"></div><div class="a" style="left:202.7px;top:106.6px;width:12.5px;height:2.1px;background:#2e3432;opacity:0.35;transform:rotate(-10deg)"></div><div class="a" style="left:62.7px;top:104.1px;width:7.7px;height:2.3px;background:#7a7a68;opacity:0.51;transform:rotate(-21deg)"></div><div class="a" style="left:132.9px;top:98.9px;width:17.0px;height:1.8px;background:#7a7a68;opacity:0.39;transform:rotate(-11deg)"></div><div class="a" style="left:214.6px;top:90.1px;width:13.1px;height:1.3px;background:#5a5e50;opacity:0.55;transform:rotate(-22deg)"></div><div class="a" style="left:38.2px;top:110.9px;width:8.7px;height:1.6px;background:#8c8c78;opacity:0.37;transform:rotate(-11deg)"></div><div class="a" style="left:151.4px;top:105.3px;width:15.3px;height:2.5px;background:#2e3432;opacity:0.44;transform:rotate(-17deg)"></div><div class="a" style="left:1.5px;top:88.7px;width:19.4px;height:1.4px;background:#7a7a68;opacity:0.54;transform:rotate(-19deg)"></div><div class="a" style="left:140.5px;top:102.1px;width:8.4px;height:1.0px;background:#3a403c;opacity:0.33;transform:rotate(-11deg)"></div><div class="a" style="left:82.8px;top:91.5px;width:6.4px;height:1.1px;background:#3a403c;opacity:0.51;transform:rotate(-14deg)"></div><div class="a" style="left:15.8px;top:102.8px;width:11.1px;height:2.2px;background:#8c8c78;opacity:0.57;transform:rotate(-24deg)"></div><div class="a" style="left:208.3px;top:110.9px;width:19.2px;height:1.2px;background:#5a5e50;opacity:0.36;transform:rotate(-24deg)"></div><div class="a" style="left:227.8px;top:110.8px;width:16.6px;height:1.1px;background:#7a7a68;opacity:0.44;transform:rotate(-23deg)"></div><div class="a" style="left:20px;top:22px;width:40px;height:14px;border-radius:50%;background:rgba(255,255,255,.6);filter:blur(3px)"></div><div class="a" style="left:165px;top:20px;width:55px;height:22px;border-radius:50%;background:rgba(240,242,242,.55);filter:blur(4px)"></div><div class="a" style="left:100px;top:30px;width:30px;height:10px;border-radius:50%;background:rgba(255,255,255,.5);filter:blur(3px)"></div><div class="a" style="left:150px;top:70px;width:40px;height:25px;border-radius:50%;background:rgba(150,160,90,.35);filter:blur(3px)"></div><div class="a" style="left:128px;top:40px;width:40px;height:60px;background:rgba(40,100,140,.25);filter:blur(2px)"></div></div><!-- /texture -->
<div class="a" style="left:56px;top:2px;width:1.6px;height:42px;opacity:.75;background:repeating-linear-gradient(180deg,#e8e8e8 0 4px,#c86a6a 4px 8px)"></div>
<div class="a" style="left:73px;top:18px;width:1.6px;height:26px;opacity:.75;background:repeating-linear-gradient(180deg,#e8e8e8 0 4px,#c86a6a 4px 8px)"></div>
<div class="a" style="left:89px;top:20px;width:1.6px;height:24px;opacity:.75;background:repeating-linear-gradient(180deg,#e8e8e8 0 4px,#c86a6a 4px 8px)"></div>
<div class="a" style="left:103px;top:22px;width:1.6px;height:18px;opacity:.75;background:repeating-linear-gradient(180deg,#e8e8e8 0 4px,#c86a6a 4px 8px)"></div>
<div class="a" style="left:125px;top:2px;width:4px;height:75px;opacity:.6;background:linear-gradient(180deg,#d86a6a 0,#cf5a5a 22%,#e0dede 22%,#e0dede 30%,#c85a5a 30%,#b65050 100%)"></div>
<div class="a" style="left:137px;top:12px;width:3.5px;height:10px;background:#d06a6a;opacity:.85;transform:rotate(35deg)"></div>
<div class="a" style="left:170px;top:40px;width:16px;height:17px;opacity:.8;background:linear-gradient(90deg,#b9bdbd,#dcdede,#aeb3b3);border-radius:45% 45% 8% 8%"></div>
<div class="a" style="left:197px;top:42px;width:14px;height:13px;opacity:.7;background:linear-gradient(90deg,#b9bdbd,#d4d7d7,#a9aeae);border-radius:45% 45% 8% 8%"></div>
<div class="a" style="left:0;top:90px;width:245px;height:25px;background:linear-gradient(180deg,rgba(0,0,0,0),rgba(0,0,0,.25))"></div>
<div class="a" style="left:7.5px;top:40.5px;width:113px;height:32.5px;background:rgba(250,250,250,.82);border-radius:6px"></div>
<div class="a" style="left:15.5px;top:56px;width:9px;height:1px;border-top:1px dotted #777"></div>
<div class="t" style="left:35.5px;top:51px;font-size:7px;color:#333">Stay Cool with HydroChill</div>
<div class="t" style="left:7.5px;top:76px;font-size:6.6px;font-weight:bold;color:#fff;text-shadow:0 0 2px rgba(0,0,0,.5)">Được tài trợ &nbsp;ⓘ · 1/2</div>
<div class="t" style="left:83.5px;top:76px;font-size:6.4px;font-weight:bold;color:#fff;text-shadow:0 0 2px rgba(0,0,0,.5)">by.hydrochill.co</div>
<div class="a" style="left:180px;top:53px;width:58px;height:20px;background:rgba(28,30,28,.7);border-radius:10px"></div>
<div class="t" style="left:189.5px;top:57px;font-size:7.2px;font-weight:bold;color:#fff">Bỏ qua</div>
<svg class="a" style="left:221px;top:59px" width="10" height="8" viewBox="0 0 10 8"><path d="M0.5 0.5L6.5 4L0.5 7.5z" fill="#fff"/><rect x="7.6" y="0.5" width="1.4" height="7" fill="#fff"/></svg>
<div class="a" style="left:7.5px;top:92.5px;width:230px;height:2px;background:#dcb822"></div>
<svg class="a" style="left:12px;top:101px" width="8" height="9" viewBox="0 0 8 9"><path d="M0.5 0.5L7.5 4.5L0.5 8.5z" fill="#fff"/></svg>
<svg class="a" style="left:33px;top:101px" width="10" height="9" viewBox="0 0 10 9"><path d="M0.5 0.5L6.5 4.5L0.5 8.5z" fill="#fff"/><rect x="7.5" y="0.5" width="1.5" height="8" fill="#fff"/></svg>
<svg class="a" style="left:51px;top:101px" width="10" height="9" viewBox="0 0 10 9"><path d="M0.5 3h2L5 0.7v7.6L2.5 6h-2z" fill="#fff"/><path d="M6.5 2.5a2.5 2.5 0 0 1 0 4M7.8 1.2a4.3 4.3 0 0 1 0 6.6" stroke="#fff" stroke-width="0.9" fill="none"/></svg>
<div class="t" style="left:72.5px;top:99.5px;font-size:7.8px;color:#fff">0:51 / 2:29</div>

<svg class="a" style="left:123px;top:101px" width="9" height="9" viewBox="0 0 9 9"><circle cx="4.5" cy="4.5" r="4.2" fill="#fff"/><path d="M3.4 2.6L6.3 4.5 3.4 6.4z" fill="#333"/></svg>
<svg class="a" style="left:138px;top:101px" width="11" height="9" viewBox="0 0 11 9"><rect x="0.5" y="0.5" width="10" height="8" rx="1" fill="#fff"/><path d="M2 4h3M6 4h3M2 6h5" stroke="#555" stroke-width="0.9"/></svg>
<svg class="a" style="left:161px;top:100.5px" width="10" height="10" viewBox="0 0 24 24"><path d="M12 8.5a3.5 3.5 0 1 0 0 7 3.5 3.5 0 0 0 0-7z" fill="none" stroke="#fff" stroke-width="2.4"/><path d="M10.3 2h3.4l.6 2.6 1.8.8 2.3-1.4 2.4 2.4-1.4 2.3.8 1.8 2.6.6v3.4l-2.6.6-.8 1.8 1.4 2.3-2.4 2.4-2.3-1.4-1.8.8-.6 2.6h-3.4l-.6-2.6-1.8-.8-2.3 1.4-2.4-2.4 1.4-2.3-.8-1.8L2 13.7v-3.4l2.6-.6.8-1.8L4 5.6 6.4 3.2l2.3 1.4 1.8-.8z" fill="#fff"/><circle cx="12" cy="12" r="3" fill="#555"/></svg>
<svg class="a" style="left:180px;top:101px" width="11" height="9" viewBox="0 0 11 9"><rect x="0.5" y="0.5" width="10" height="8" rx="1" fill="none" stroke="#fff" stroke-width="1"/><rect x="5" y="4" width="4" height="3" fill="#fff"/></svg>
<svg class="a" style="left:201px;top:101px" width="12" height="9" viewBox="0 0 12 9"><rect x="0.5" y="0.5" width="11" height="8" rx="1" fill="none" stroke="#fff" stroke-width="1"/></svg>
<svg class="a" style="left:223px;top:100px" width="11" height="11" viewBox="0 0 11 11"><path d="M0.5 3.5v-3h3M7.5 0.5h3v3M10.5 7.5v3h-3M3.5 10.5h-3v-3" stroke="#fff" stroke-width="1.2" fill="none"/></svg>

</div>
<!-- /video -->
</div>
<!-- /chrome -->
<!-- logo -->
<svg class="a" style="left:20px;top:20px" width="80" height="38" viewBox="20 20 80 38">
<defs>
<linearGradient id="og" x1="0" y1="0" x2="0" y2="1"><stop offset="0" stop-color="#f8c040"/><stop offset="1" stop-color="#f0a022"/></linearGradient>
<linearGradient id="bg1" x1="0" y1="0" x2="1" y2="1"><stop offset="0" stop-color="#2a9be8"/><stop offset="1" stop-color="#1166c4"/></linearGradient>
<linearGradient id="bg2" x1="0" y1="0" x2="0" y2="1"><stop offset="0" stop-color="#1a6fd0"/><stop offset="1" stop-color="#0a3f98"/></linearGradient>
</defs>
<path d="M26.5 53.5 Q23 53.5 24.8 50 L36 27.5 Q37.8 24 41.5 24 L44 24 Q47 24 48.5 26.5 L60 45 Q61.5 48 59.5 50.5 L57 53.5 Z" fill="url(#og)"/>
<path d="M37.5 29 L48.5 46.5" stroke="#fff" stroke-width="0.9" opacity=".55"/>
<path d="M35.5 54 A13.5 10.5 0 0 1 62.5 54 Z" fill="#f3ab2e" stroke="#fde3a6" stroke-width="0.8"/>
<path d="M59.5 44.5 L65 27.5 Q66.2 24.5 69.5 24.5 L76.5 24.5 Q80 24.5 78.8 28 L68.5 46.5 Q67 48.5 64.5 48 L61 47.5 Q58.8 47 59.5 44.5 Z" fill="url(#bg1)"/>
<path d="M81.5 31 L91.8 48 Q93.5 53.5 88 53.5 L69.5 53.5 Z" fill="url(#bg2)"/>
</svg>
<svg class="a" style="left:92px;top:24px" width="72" height="34" viewBox="0 0 72 34">
<defs><linearGradient id="mg" x1="0" y1="0" x2="0" y2="1"><stop offset="0" stop-color="#1c86d6"/><stop offset="1" stop-color="#0b3e98"/></linearGradient></defs>
<text x="2" y="22.5" font-family="Liberation Sans" font-weight="bold" font-size="25" fill="url(#mg)" stroke="url(#mg)" stroke-width="0.9" textLength="63" lengthAdjust="spacingAndGlyphs">MKT</text>
<text x="3" y="30.5" font-family="Liberation Sans" font-size="5" fill="#1d3b7a" textLength="62" lengthAdjust="spacingAndGlyphs">Phần mềm Marketing Đa nền tảng</text>
</svg>
<!-- /logo -->
<!-- banner content -->
<svg class="a" style="left:36px;top:589px" width="50" height="40" viewBox="0 0 50 40">
<path d="M3.3 18.8 L9.8 5 Q11.3 2.6 14.3 2.6 L18.6 2.6 Q20.6 2.6 22 4.6 L23.5 7.2 L25 4.6 Q26.4 2.6 28.4 2.6 L32.7 2.6 Q35.7 2.6 37.2 5 L43.7 18.8 Q44.8 21.3 41.8 21.3 L5.2 21.3 Q2.2 21.3 3.3 18.8 Z" fill="#fff"/>
<path d="M11 6.5 L17.2 17.2 M36 6.5 L29.8 17.2" stroke="#2a3a88" stroke-width="0.8"/>
<path d="M15.3 21.3 A8.2 6.8 0 0 1 31.7 21.3" fill="none" stroke="#2a3a88" stroke-width="0.8"/>
<text x="5" y="33.5" font-family="Liberation Sans" font-weight="bold" font-size="14.5" fill="#fff" stroke="#fff" stroke-width="0.5" textLength="36.4" lengthAdjust="spacingAndGlyphs">MKT</text>
<text x="5" y="37" font-family="Liberation Sans" font-size="2.6" fill="#dde" textLength="37" lengthAdjust="spacingAndGlyphs">Phần mềm Marketing Đa nền tảng</text>
</svg>
<div class="t" style="left:93px;top:598px;font-size:16.4px;line-height:20px;color:#fff;letter-spacing:0.1px">Hiệu quả - Nhanh - Dễ dùng</div>
<svg class="a" style="left:726px;top:599px" width="20" height="20" viewBox="0 0 20 20">
<circle cx="10" cy="10" r="8.8" fill="#fff"/>
<g stroke="#2d7bbd" stroke-width="0.9" fill="none"><ellipse cx="10" cy="10" rx="4" ry="8.8"/><path d="M10 1.2v17.6M1.5 7h17M1.5 13h17"/></g>
</svg>
<div class="t" style="left:752px;top:598px;font-family:'Liberation Serif',serif;font-size:16.4px;line-height:20px;color:#f4fbff">mktcaresoftware.com</div>
<!-- /banner content -->
</body></html>
